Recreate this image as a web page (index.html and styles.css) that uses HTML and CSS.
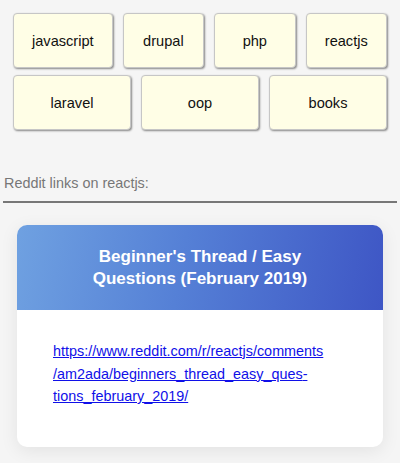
FILE: index.html
```html
<!DOCTYPE html>
<html lang="en">
<head>
<meta charset="utf-8">
<title>Reddit links</title>
<link rel="stylesheet" href="styles.css">
</head>
<body>
<div class="tags">
  <button class="tag">javascript</button>
  <button class="tag">drupal</button>
  <button class="tag">php</button>
  <button class="tag">reactjs</button>
  <button class="tag">laravel</button>
  <button class="tag">oop</button>
  <button class="tag">books</button>
</div>
<h2 class="heading">Reddit links on reactjs:</h2>
<div class="card">
  <div class="card-header">
    <h3 class="card-title">Beginner's Thread / Easy Questions (February 2019)</h3>
  </div>
  <div class="card-body">
    <a class="card-link" href="#">https://www.reddit.com/r/reactjs/comments<wbr>/am2ada/beginners_thread_easy_ques&shy;tions_february_2019/</a>
  </div>
</div>
</body>
</html>
```

FILE: styles.css
```css
html, body {
  margin: 0;
  padding: 0;
}
body {
  background: #f5f5f5;
  font-family: "Liberation Sans", Arial, sans-serif;
  width: 400px;
  height: 463px;
  overflow: hidden;
}
.tags {
  display: flex;
  flex-wrap: wrap;
  column-gap: 10px;
  row-gap: 7px;
  padding: 13px 13px 0;
}
.tag {
  flex: 1 1 0;
  height: 55px;
  padding: 0 18px;
  border: 1px solid #c6c6c6;
  border-radius: 4px;
  background: #fffee6;
  box-shadow: 1px 1px 2px rgba(0, 0, 0, 0.45);
  font-family: "Liberation Sans", Arial, sans-serif;
  font-size: 14.6px;
  color: #111;
  white-space: nowrap;
}
.heading {
  margin: 44px 3px 0;
  padding: 0 1px 8px;
  border-bottom: 2px solid #777;
  font-size: 14.4px;
  line-height: 19px;
  font-weight: normal;
  color: #777;
}
.card {
  margin: 22px 17px 0;
  background: #fff;
  border-radius: 10px;
  overflow: hidden;
  box-shadow: 0 4px 18px rgba(0, 0, 0, 0.08);
}
.card-header {
  height: 85px;
  display: flex;
  align-items: center;
  justify-content: center;
  padding: 0 50px;
  background: linear-gradient(100deg, #6fa1e1 0%, #5580d6 45%, #3e56c5 100%);
}
.card-title {
  margin: 0;
  font-size: 17px;
  line-height: 22px;
  font-weight: bold;
  color: #fff;
  text-align: center;
}
.card-body {
  padding: 30px 36px 39px;
}
.card-link {
  font-size: 14.4px;
  line-height: 22.5px;
  color: #1010e8;
}
```
